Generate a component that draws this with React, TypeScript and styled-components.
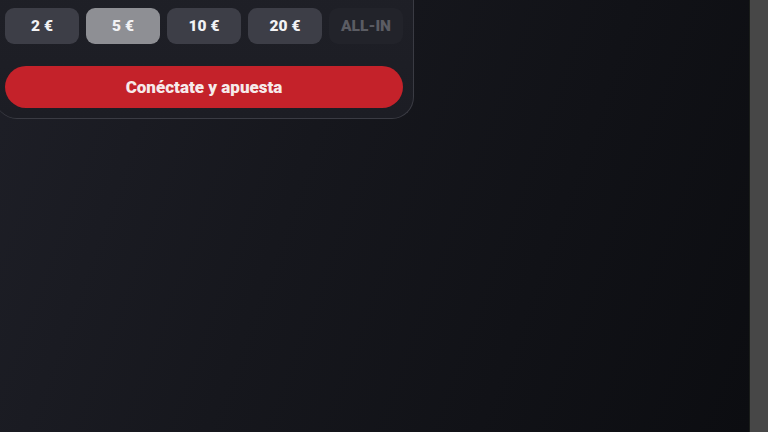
import styled, { createGlobalStyle } from "styled-components";

const Global = createGlobalStyle`
    html, body {
        margin: 0;
        padding: 0;
        height: 100%;
        overflow: hidden;
    }
    #root {
        height: 100%;
    }
`;

const Page = styled.div`
    display: flex;
    width: 768px;
    height: 432px;
    font-family: Roboto, "Liberation Sans", sans-serif;
`;

const Main = styled.div`
    flex: 1;
    background: linear-gradient(110deg, #1e1f27 0%, #16171d 40%, #0c0d11 100%);
    border-right: 1px solid #1a1d1a;
`;

const Scrollbar = styled.div`
    width: 18px;
    background: #474747;
`;

const Card = styled.div`
    width: 398px;
    margin: -40px 0 0 -5px;
    padding: 48px 10px 10px 10px;
    background: linear-gradient(180deg, #1f2027 0%, #1c1d24 100%);
    border: 1px solid #3a3b43;
    border-top: none;
    border-left: none;
    border-radius: 0 0 22px 22px;
    display: flex;
    flex-direction: column;
    gap: 22px;
`;

const Chips = styled.div`
    display: flex;
    gap: 7px;
`;

const Chip = styled.button<{ $active?: boolean; $muted?: boolean }>`
    width: 74px;
    height: 36px;
    border: none;
    border-radius: 9px;
    background: ${p => p.$active ? "#8e8f94" : p.$muted ? "#22232a" : "#3d3e47"};
    color: ${p => p.$muted ? "#5b5c63" : "#f2f2f4"};
    font-family: inherit;
    font-size: 15.5px;
    font-weight: 900;
    padding: 0;
    cursor: pointer;
`;

const Cta = styled.button`
    height: 42px;
    border: none;
    border-radius: 21px;
    background: #c4222a;
    color: #f6eaea;
    font-family: inherit;
    font-size: 17px;
    font-weight: 900;
    cursor: pointer;
`;

const amounts = ["2 €", "5 €", "10 €", "20 €"];

export default function App() {
    return (
        <>
            <Global />
            <Page>
                <Main>
                    <Card>
                        <Chips>
                            {amounts.map(a => (
                                <Chip key={a} $active={a === "5 €"}>{a}</Chip>
                            ))}
                            <Chip $muted>ALL-IN</Chip>
                        </Chips>
                        <Cta>Conéctate y apuesta</Cta>
                    </Card>
                </Main>
                <Scrollbar />
            </Page>
        </>
    );
}
